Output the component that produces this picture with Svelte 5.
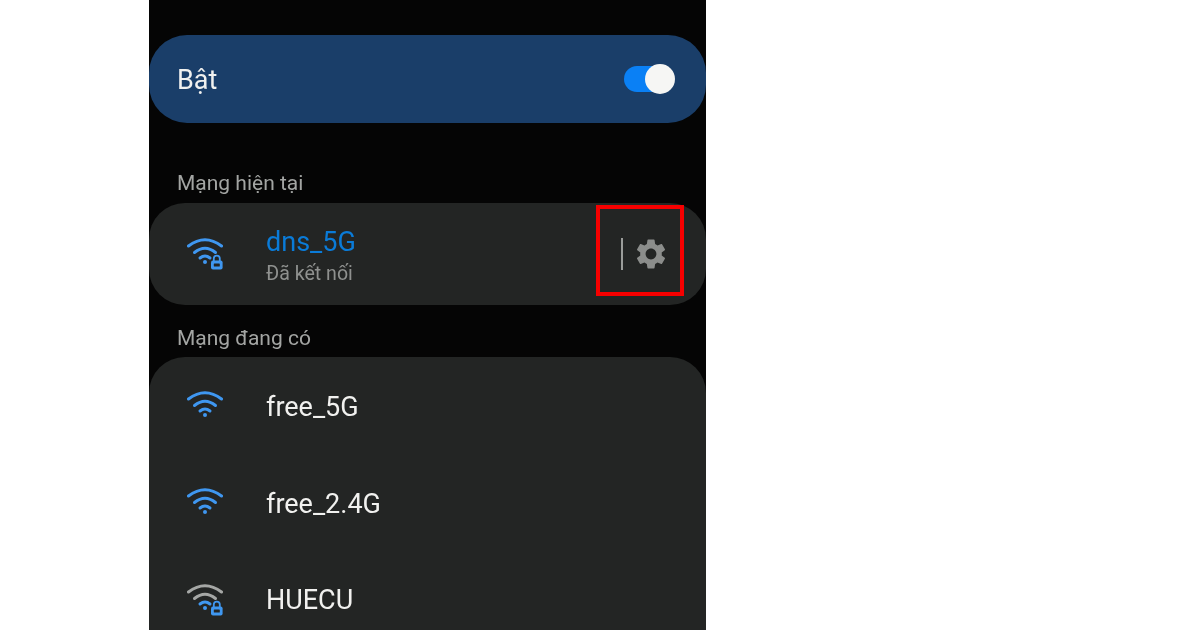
<script>
	const networks = [
		{ name: "free_5G", locked: false, weak: false },
		{ name: "free_2.4G", locked: false, weak: false },
		{ name: "HUECU", locked: true, weak: true },
	];
</script>

{#snippet wifi(locked, weak)}
	<svg class="wifi" class:weak viewBox="0 0 36 34" width="36" height="34" fill="none" aria-hidden="true">
		<path class="far" d="M1.5 9 Q18 -3.6 34.5 9" />
		<path class="far" d="M7.5 15.5 Q18 7 28.5 15.5" />
		<path class="near" d="M13 21 Q18 17 23 21" />
		<circle class="dot" cx="18" cy="25" r="2" />
		{#if locked}
			<path class="lock-gap" d="M26 17 h7 v6 h3 v11 h-13 v-11 h3 z" />
			<path class="shackle" d="M26.8 24 v-2.4 a3 3 0 0 1 6 0 v2.4" />
			<rect class="lock" x="24" y="23.6" width="11.6" height="8.8" rx="2" />
			<rect class="keyhole" x="26.8" y="26.4" width="6" height="3.2" rx="0.6" />
		{/if}
	</svg>
{/snippet}

<main class="phone">
	<section class="master">
		<span>Bật</span>
		<div class="toggle"><div class="thumb"></div></div>
	</section>

	<h2 class="first">Mạng hiện tại</h2>
	<section class="card current">
		<div class="icon">{@render wifi(true, false)}</div>
		<div class="info">
			<div class="name">dns_5G</div>
			<div class="status">Đã kết nối</div>
		</div>
		<div class="divider"></div>
		<svg class="gear" viewBox="0 0 24 24" width="36" height="36" aria-hidden="true">
			<path d="M19.14 12.94c.04-.3.06-.61.06-.94 0-.32-.02-.64-.07-.94l2.03-1.58c.18-.14.23-.41.12-.61l-1.92-3.32c-.12-.22-.37-.29-.59-.22l-2.39.96c-.5-.38-1.03-.7-1.62-.94l-.36-2.54c-.04-.24-.24-.41-.48-.41h-3.84c-.24 0-.43.17-.47.41l-.36 2.54c-.59.24-1.13.57-1.62.94l-2.39-.96c-.22-.08-.47 0-.59.22L2.74 8.87c-.12.21-.08.47.12.61l2.03 1.58c-.05.3-.09.63-.09.94s.02.64.07.94l-2.03 1.58c-.18.14-.23.41-.12.61l1.92 3.32c.12.22.37.29.59.22l2.39-.96c.5.38 1.03.7 1.62.94l.36 2.54c.05.24.24.41.48.41h3.84c.24 0 .44-.17.47-.41l.36-2.54c.59-.24 1.13-.56 1.62-.94l2.39.96c.22.08.47 0 .59-.22l1.92-3.32c.12-.22.07-.47-.12-.61l-2.01-1.58zM12 15.6c-1.98 0-3.6-1.62-3.6-3.6s1.62-3.6 3.6-3.6 3.6 1.62 3.6 3.6-1.62 3.6-3.6 3.6z" />
		</svg>
		<div class="highlight"></div>
	</section>

	<h2>Mạng đang có</h2>
	<section class="card list">
		{#each networks as net}
			<div class="row">
				<div class="icon">{@render wifi(net.locked, net.weak)}</div>
				<div class="name">{net.name}</div>
			</div>
		{/each}
	</section>
</main>

<style>
	:global(body) {
		background: #fff;
		overflow: hidden;
	}

	.phone {
		width: 557px;
		height: 630px;
		margin-left: 149px;
		padding-top: 35px;
		box-sizing: border-box;
		overflow: hidden;
		background: #050505;
		color: #f1f1ef;
		font-family: Roboto, "Noto Sans", sans-serif;
		filter: blur(0.5px);
	}

	.master {
		display: flex;
		align-items: center;
		justify-content: space-between;
		height: 88px;
		padding: 2px 33px 0 28px;
		box-sizing: border-box;
		border-radius: 38px;
		background: #1a3e69;
		font-size: 27px;
	}

	.toggle {
		position: relative;
		top: -1px;
		width: 49px;
		height: 26px;
		border-radius: 13px;
		background: #0a80f5;
	}

	.thumb {
		position: absolute;
		top: -2px;
		right: -2px;
		width: 30px;
		height: 30px;
		border-radius: 50%;
		background: #f6f6f4;
	}

	h2 {
		margin: 0;
		height: 52px;
		padding: 21px 0 0 28px;
		box-sizing: border-box;
		font-size: 21px;
		line-height: 24px;
		font-weight: 400;
		color: #a3a5a3;
	}

	h2.first {
		height: 80px;
		padding-top: 48px;
	}

	.card {
		border-radius: 36px;
		background: #232524;
	}

	.current {
		position: relative;
		display: flex;
		align-items: center;
		height: 102px;
	}

	.icon {
		display: flex;
		width: 117px;
		padding-left: 38px;
		box-sizing: border-box;
		flex: none;
	}

	.info {
		flex: 1;
		padding-top: 5px;
	}

	.name {
		font-size: 27px;
		line-height: 30px;
	}

	.current .name {
		color: #0a7bd8;
	}

	.status {
		margin-top: 5px;
		font-size: 19.6px;
		line-height: 24px;
		color: #8f918f;
	}

	.divider {
		width: 2px;
		height: 32px;
		margin-right: 10px;
		background: #9a9c9a;
	}

	.gear {
		margin-right: 37px;
		fill: #8b8d8b;
	}

	.highlight {
		position: absolute;
		top: 2px;
		right: 22px;
		width: 88px;
		height: 91px;
		box-sizing: border-box;
		border: 4px solid #f60000;
	}

	.list {
		height: 320px;
		padding-top: 2px;
	}

	.row {
		display: flex;
		align-items: center;
		height: 96.5px;
	}

	.wifi path {
		stroke-width: 3;
		stroke-linecap: round;
	}

	.far,
	.near {
		stroke: #3f97f0;
	}

	.dot {
		fill: #3f97f0;
	}

	.weak .far {
		stroke: #a5a7a5;
	}

	.wifi .lock-gap {
		fill: #232524;
		stroke: none;
	}

	.wifi .shackle {
		stroke: #3f97f0;
		stroke-width: 1.8;
	}

	.lock {
		fill: #3f97f0;
	}

	.keyhole {
		fill: #232524;
	}
</style>
